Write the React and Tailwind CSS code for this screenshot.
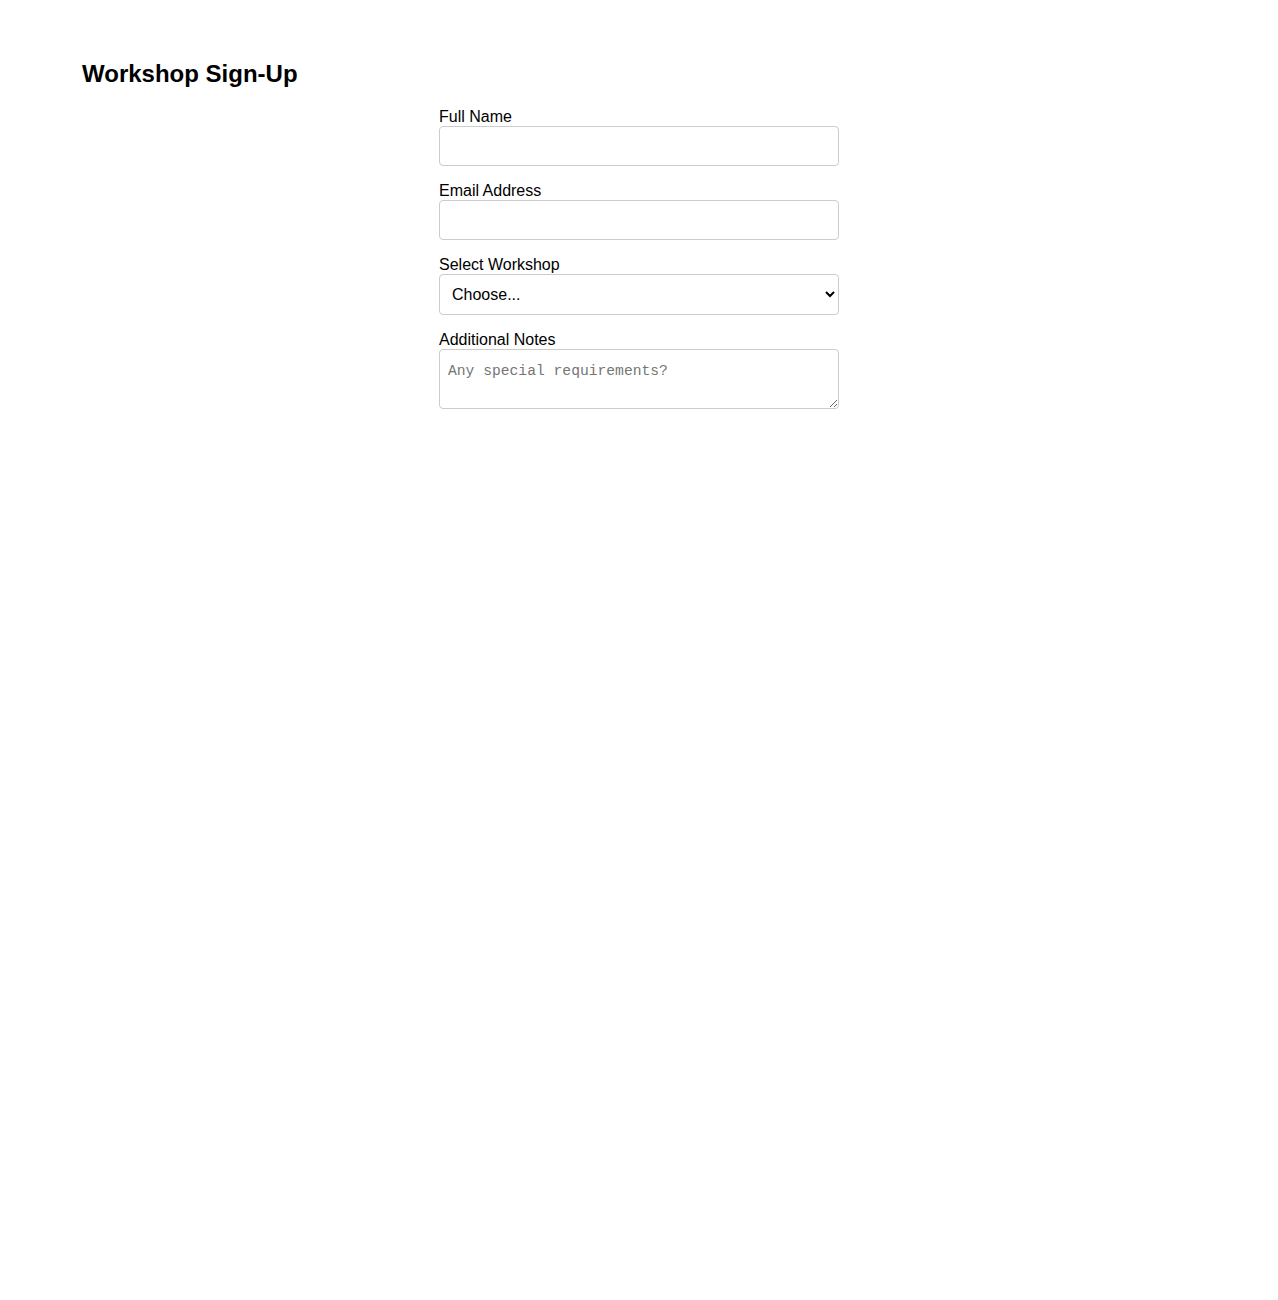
import React from 'react';

const Field = ({ label, children }) => (
  <div className="mb-4">
    <label className="block text-base leading-[18px] text-black">{label}</label>
    {children}
  </div>
);

const App = () => {
  return (
    <div className="min-h-[1300px] bg-white font-['Liberation_Sans',Arial,sans-serif] text-black">
      <div className="pl-[82px] pt-[60px]">
        <h1 className="text-2xl font-bold leading-[28px] m-0">Workshop Sign-Up</h1>
      </div>
      <form className="w-[400px] mx-auto mt-[20px]">
        <Field label="Full Name">
          <input
            type="text"
            className="block w-full h-[40px] px-3 border border-[#ccc] rounded bg-white text-base outline-none"
          />
        </Field>
        <Field label="Email Address">
          <input
            type="email"
            className="block w-full h-[40px] px-3 border border-[#ccc] rounded bg-white text-base outline-none"
          />
        </Field>
        <Field label="Select Workshop">
          <select
            defaultValue=""
            className="block w-full h-[41px] pl-2 pr-1 border border-[#ccc] rounded bg-white text-base text-black outline-none"
          >
            <option value="">Choose...</option>
            <option value="design">Design Thinking</option>
            <option value="react">Intro to React</option>
            <option value="data">Data Visualization</option>
          </select>
        </Field>
        <Field label="Additional Notes">
          <textarea
            placeholder="Any special requirements?"
            className="block w-full h-[60px] px-2 pt-[13px] pb-2 border border-[#ccc] rounded bg-white font-['Liberation_Mono',monospace] text-[14.67px] leading-[17px] placeholder:text-[#757575] outline-none"
          />
        </Field>
      </form>
    </div>
  );
};

export default App;
